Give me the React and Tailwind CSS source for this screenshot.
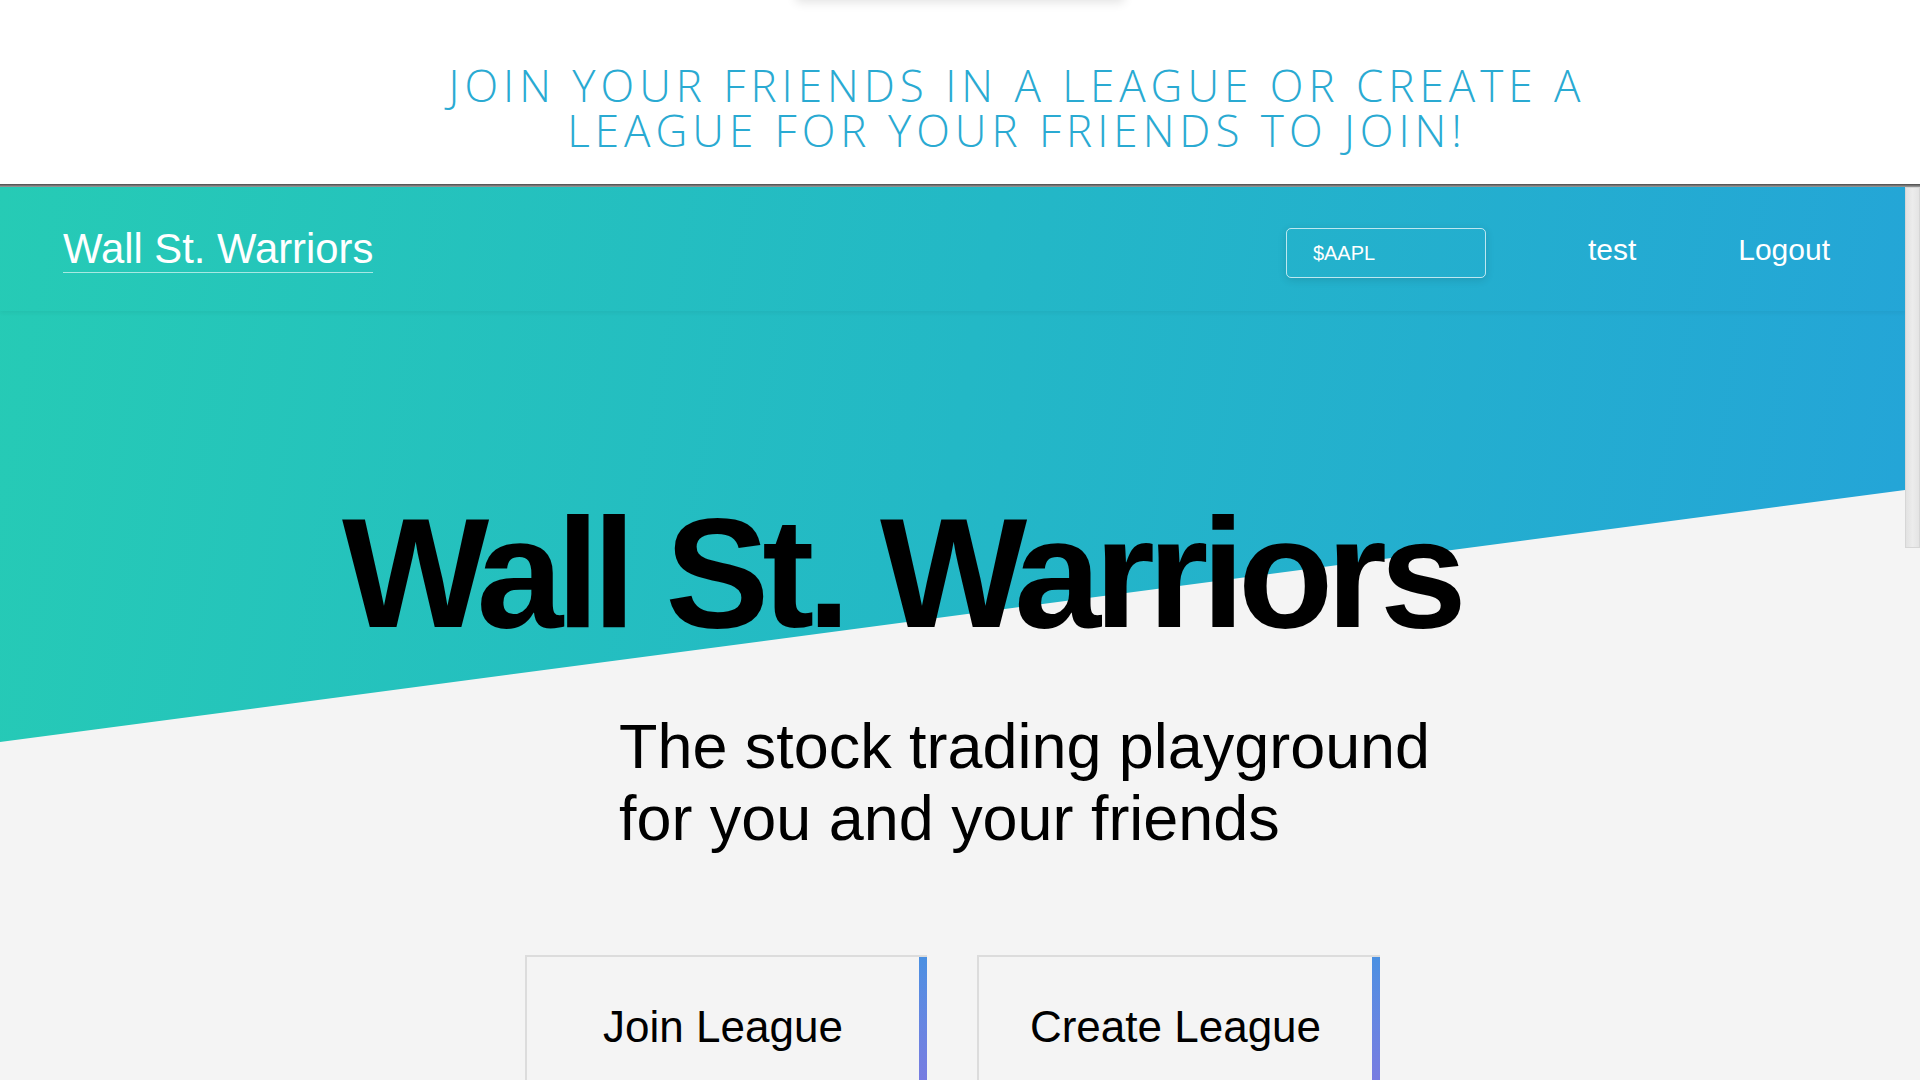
import React from "react";

export default function App() {
  return (
    <div className="w-[1920px] h-[1080px] overflow-hidden bg-[#f4f4f4] flex flex-col">
      {/* top white heading section */}
      <div className="relative h-[184px] bg-white shrink-0">
        <div className="absolute left-[796px] top-[-40px] w-[328px] h-[40px] shadow-[0_2px_10px_rgba(0,0,0,0.12)] bg-white" />
        <div className="pt-[63px] pl-[114px] text-center">
          <h2 className="text-[44px] leading-[45px] font-light uppercase text-[#2aaad2] tracking-[5px] [font-family:'Open_Sans',sans-serif]">
            Join your friends in a league or create a
            <br />
            league for your friends to join!
          </h2>
        </div>
      </div>
      <div className="h-[3px] shrink-0 bg-gradient-to-b from-[#4a4a4a] to-[#a0a0a0]" />

      {/* scroll area */}
      <div className="flex flex-1 min-h-0">
        <div className="relative flex-1 overflow-hidden [font-family:'Liberation_Sans',Arial,sans-serif]">
          <div className="absolute left-0 top-0 w-full h-[555px] bg-[linear-gradient(100deg,#26cbb5_0%,#23b8c6_50%,#24a4d8_100%)] [clip-path:polygon(0_0,100%_0,100%_303px,0_555px)]" />

          <div className="relative">
            {/* nav */}
            <nav className="h-[124px] flex items-center justify-between pl-[63px] pr-[75px] shadow-[0_2px_4px_rgba(0,0,0,0.05)]">
              <a className="text-white text-[41.8px] leading-[46px] border-b border-white/60">
                Wall St. Warriors
              </a>
              <div className="flex items-center">
                <div className="w-[200px] h-[50px] mt-[7px] rounded-[5px] border border-white/70 shadow-[0_2px_8px_rgba(0,0,0,0.12)] flex items-center pl-[26px] text-white text-[20px]">
                  $AAPL
                </div>
                <span className="ml-[102px] text-white text-[30px] leading-[34px] mt-[1px]">test</span>
                <span className="ml-[102px] text-white text-[30px] leading-[34px] mt-[1px]">Logout</span>
              </div>
            </nav>

            {/* hero */}
            <h1 className="mt-[184px] ml-[342px] text-[156px] leading-none font-bold text-black tracking-[-7px] whitespace-nowrap">
              Wall St. Warriors
            </h1>
            <p className="mt-[59px] ml-[619px] text-[62.9px] leading-[72px] text-black">
              The stock trading playground
              <br />
              for you and your friends
            </p>

            <div className="mt-[101px] flex justify-center gap-[50px]">
              <div className="w-[402px] h-[200px] flex border-t-2 border-l-2 border-[#dcdcdc]">
                <div className="flex-1 text-center pt-[45px] text-[44px] leading-[50px] text-black">Join League</div>
                <div className="w-[8px] bg-gradient-to-b from-[#4a90e2] to-[#8a6ee0]" />
              </div>
              <div className="w-[403px] h-[200px] flex border-t-2 border-l-2 border-[#dcdcdc]">
                <div className="flex-1 text-center pt-[45px] text-[44px] leading-[50px] text-black">Create League</div>
                <div className="w-[8px] bg-gradient-to-b from-[#4a90e2] to-[#8a6ee0]" />
              </div>
            </div>
          </div>
        </div>

        {/* scrollbar */}
        <div className="w-[15px] shrink-0 bg-[#f4f4f4]">
          <div className="h-[361px] bg-gradient-to-r from-[#e2e2e2] via-[#ececec] to-[#e4e4e4] border border-[#d6d6d6]" />
        </div>
      </div>
    </div>
  );
}
